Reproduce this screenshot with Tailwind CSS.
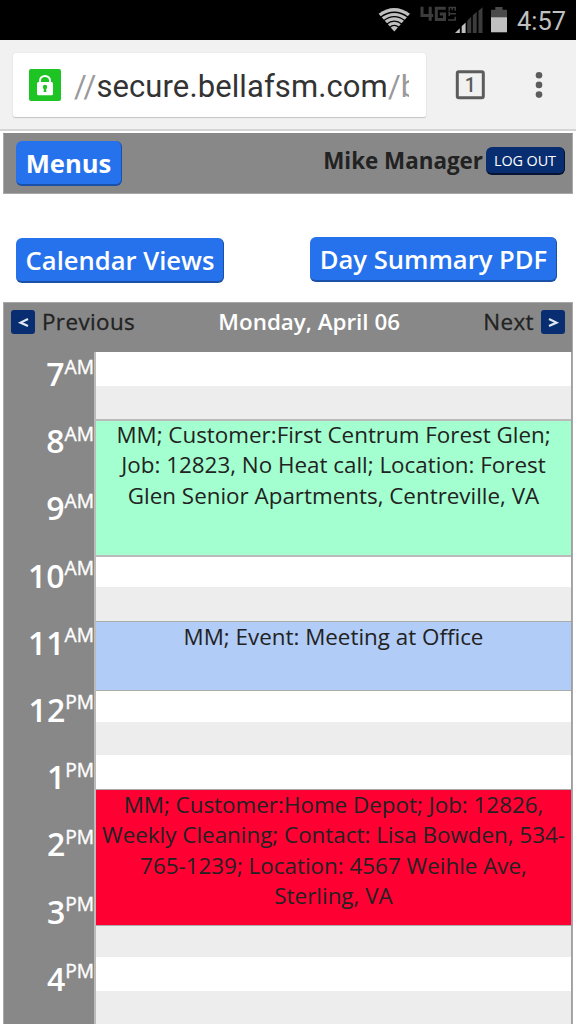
<!DOCTYPE html>
<html lang="en">
<head>
  <meta charset="UTF-8" />
  <meta name="viewport" content="width=device-width, initial-scale=1.0" />
  <title>Day Calendar</title>
  <script src="https://cdn.jsdelivr.net/npm/@tailwindcss/browser@4"></script>
</head>
<body class="bg-white h-[1024px] overflow-hidden font-['Open_Sans',sans-serif] text-[#222]">

  <!-- Status bar -->
  <div class="h-10 bg-black flex justify-end text-[#c0c0c0]">
    <svg width="210" height="40" viewBox="0 0 210 40">
      <!-- wifi -->
      <path d="M12.6 13.7 Q28.3 2.3 44 13.7 L28.3 31.5 Z" fill="#c0c0c0"/>
      <g fill="none" stroke="#000" stroke-width="1.3">
        <path d="M14.5 17.2 Q28.3 7.3 42.1 17.2"/>
        <path d="M17.5 20.8 Q28.3 12.6 39.1 20.8"/>
        <path d="M20.5 24.2 Q28.3 18 36.1 24.2"/>
        <path d="M23.5 27.4 Q28.3 23.4 33.1 27.4"/>
      </g>
      <!-- 4G LTE -->
      <g fill="none" stroke="#3c3c3c" stroke-width="3">
        <path d="M56 6.8 V15.6 H67.2 M64.2 6.8 V20.8"/>
        <path d="M79.8 8.3 H70.3 V19.4 H78.5 V14 H73.8"/>
      </g>
      <g fill="none" stroke="#3c3c3c" stroke-width="1.5">
        <path d="M82 20 H89.3 V16.8"/>
        <path d="M82.5 13.7 H90 M83.2 11.4 V16"/>
        <path d="M83.2 10.7 V7.4 H89.3 V10.7 M86.2 7.4 V10.2"/>
      </g>
      <!-- signal -->
      <path d="M89 33 L93.8 28.2 V33 Z M95.7 26.3 L99.6 22.5 V33 H95.7 Z" fill="#c0c0c0"/>
      <path d="M101.2 20.8 L105.2 16.8 V33 H101.2 Z M106.8 15.3 L110.7 11.7 V33 H106.8 Z M112.5 10.8 L116.5 7.2 V33 H112.5 Z" fill="#3c3c3c"/>
      <!-- battery -->
      <path d="M125 9.7 H129.3 V7 H136.5 V9.7 H141 V18 H125 Z" fill="#4a4a4a"/>
      <path d="M125 17.3 H141 V32.3 H125 Z" fill="#c0c0c0"/>
      <text x="151" y="29.8" font-size="25.5" textLength="49" lengthAdjust="spacingAndGlyphs" fill="#c0c0c0" class="font-['Roboto']">4:57</text>
    </svg>
  </div>

  <!-- Browser toolbar -->
  <div class="h-[91px] bg-[#f1f1f1] border-b-2 border-[#d5d5d5] flex items-start pt-[13px] pl-[13px]">
    <div class="w-[413px] h-16 bg-white rounded-xs shadow-[0_1px_1px_#c4c4c4,0_0_1px_#c4c4c4] flex items-center pl-4">
      <svg width="32" height="32" viewBox="0 0 32 32" class="shrink-0">
        <rect width="32" height="32" rx="2" fill="#1dc424"/>
        <rect x="8" y="13" width="16" height="13.3" rx="1.5" fill="#fff"/>
        <path d="M11 14 V11.5 A5 4.5 0 0 1 21 11.5 V14" fill="none" stroke="#fff" stroke-width="2"/>
        <circle cx="16" cy="18" r="2.2" fill="#1dc424"/>
        <path d="M15 18 H17 L17.4 23 H14.6 Z" fill="#1dc424"/>
      </svg>
      <div class="mt-[3px] ml-[13px] w-[335px] overflow-hidden whitespace-nowrap font-['Roboto',sans-serif] text-[31px] leading-10 text-[#999] tracking-[0.1px]">//<span class="text-[#333]">secure.bellafsm.com</span>/b</div>
    </div>
    <svg width="120" height="64" viewBox="0 0 120 64" class="ml-[20px]">
      <rect x="11.3" y="18.8" width="26" height="26" rx="1.5" fill="none" stroke="#5c5c5c" stroke-width="3"/>
      <text x="24.3" y="38.6" text-anchor="middle" font-size="19.5" font-weight="500" fill="#5c5c5c" class="font-['Roboto']">1</text>
      <g fill="#5c5c5c">
        <circle cx="93" cy="22.3" r="3.3"/>
        <circle cx="93" cy="31.9" r="3.3"/>
        <circle cx="93" cy="41.6" r="3.3"/>
      </g>
    </svg>
  </div>

  <!-- Page header -->
  <div class="mt-[2px] mx-[3px] h-[61px] bg-[#888] border border-[#a8a8a8] border-t-[#888] flex items-start justify-between pl-3 pr-[7px] pt-[7px]">
    <button class="w-[106px] h-[45px] pt-[2px] rounded-[6px] bg-[#2672ec] border-r border-b-2 border-[#1a50a8] text-white font-bold text-[25.6px] leading-none whitespace-nowrap">Menus</button>
    <div class="flex items-center pt-[6px]">
      <span class="font-bold text-[22.4px] leading-[28px] mr-[3px]">Mike Manager</span>
      <button class="w-[79px] h-[28px] pt-[2px] rounded-[6px] bg-[#082d70] border-r border-b-2 border-[#061431] text-white text-[14.4px] leading-none tracking-[-0.1px] whitespace-nowrap">LOG OUT</button>
    </div>
  </div>

  <!-- Page actions -->
  <div class="h-[108px] flex items-start justify-between pl-4 pr-[19px] pt-[43px]">
    <button class="mt-[1px] w-[208px] h-[45px] pt-[2px] pl-[1px] rounded-[6px] bg-[#2672ec] border-r border-b-2 border-[#1a50a8] text-white font-semibold text-[25.6px] leading-none whitespace-nowrap">Calendar Views</button>
    <button class="w-[247px] h-[45px] pt-[2px] pl-[1px] rounded-[6px] bg-[#2672ec] border-r border-b-2 border-[#1a50a8] text-white font-semibold text-[25.6px] leading-none whitespace-nowrap">Day Summary PDF</button>
  </div>

  <!-- Day view -->
  <div class="mx-[3px] bg-[#888] border-t border-x border-[#a8a8a8] h-[722px]">
    <div class="h-[49px] flex justify-between items-start px-[7px] pt-[7px] text-[22.4px] leading-6 font-semibold whitespace-nowrap">
      <div class="flex items-center">
        <svg width="24" height="24" viewBox="0 0 24 24"><rect width="24" height="24" rx="3" fill="#082d70"/><path d="M17 9 L9.5 12.6 L17 16" fill="none" stroke="#e0e6f0" stroke-width="2.2"/></svg>
        <span class="ml-[7px] font-medium [-webkit-text-stroke:0.3px_#222] tracking-[0.4px]">Previous</span>
      </div>
      <span class="text-white">Monday, April 06</span>
      <div class="flex items-center justify-end">
        <span class="mr-[7px] font-medium [-webkit-text-stroke:0.3px_#222] tracking-[0.4px]">Next</span>
        <svg width="24" height="24" viewBox="0 0 24 24"><rect width="24" height="24" rx="3" fill="#082d70"/><path d="M8 9 L15.5 12.6 L8 16" fill="none" stroke="#e0e6f0" stroke-width="2.2"/></svg>
      </div>
    </div>

    <div class="flex">
      <!-- Hours -->
      <div class="w-[90px] shrink-0 text-white font-semibold text-[32px] text-right whitespace-nowrap">
        <div class="h-[67.2px] leading-[43px]">7<span class="relative -top-[12.5px] text-[19.2px] leading-none font-medium [-webkit-text-stroke:0.4px_#fff]">AM</span></div>
        <div class="h-[67.2px] leading-[43px]">8<span class="relative -top-[12.5px] text-[19.2px] leading-none font-medium [-webkit-text-stroke:0.4px_#fff]">AM</span></div>
        <div class="h-[67.2px] leading-[43px]">9<span class="relative -top-[12.5px] text-[19.2px] leading-none font-medium [-webkit-text-stroke:0.4px_#fff]">AM</span></div>
        <div class="h-[67.2px] leading-[43px]">10<span class="relative -top-[12.5px] text-[19.2px] leading-none font-medium [-webkit-text-stroke:0.4px_#fff]">AM</span></div>
        <div class="h-[67.2px] leading-[43px]">11<span class="relative -top-[12.5px] text-[19.2px] leading-none font-medium [-webkit-text-stroke:0.4px_#fff]">AM</span></div>
        <div class="h-[67.2px] leading-[43px]">12<span class="relative -top-[12.5px] text-[19.2px] leading-none font-medium [-webkit-text-stroke:0.4px_#fff]">PM</span></div>
        <div class="h-[67.2px] leading-[43px]">1<span class="relative -top-[12.5px] text-[19.2px] leading-none font-medium [-webkit-text-stroke:0.4px_#fff]">PM</span></div>
        <div class="h-[67.2px] leading-[43px]">2<span class="relative -top-[12.5px] text-[19.2px] leading-none font-medium [-webkit-text-stroke:0.4px_#fff]">PM</span></div>
        <div class="h-[67.2px] leading-[43px]">3<span class="relative -top-[12.5px] text-[19.2px] leading-none font-medium [-webkit-text-stroke:0.4px_#fff]">PM</span></div>
        <div class="h-[67.2px] leading-[43px]">4<span class="relative -top-[12.5px] text-[19.2px] leading-none font-medium [-webkit-text-stroke:0.4px_#fff]">PM</span></div>
      </div>

      <!-- Half hour slots and bookings -->
      <div class="flex-1 border-l-2 border-r border-l-[#bbb] border-r-[#a0a0a0] bg-white text-center text-[22.4px] leading-[30.4px] whitespace-nowrap">
        <div class="h-[34px]"></div>
        <div class="h-[33px] bg-[#ededed]"></div>
        <div class="h-[138px] bg-[#a3ffcf] border-y-2 border-[#bbb]">
          <div class="-mt-px">MM; Customer:First Centrum Forest Glen;<br>Job: 12823, No Heat call; Location: Forest<br>Glen Senior Apartments, Centreville, VA</div>
        </div>
        <div class="h-[30px]"></div>
        <div class="h-[34px] bg-[#ededed]"></div>
        <div class="h-[70px] bg-[#b1ccf7] border-y border-[#aaa]">MM; Event: Meeting at Office</div>
        <div class="h-[31px]"></div>
        <div class="h-[33px] bg-[#ededed]"></div>
        <div class="h-[34px]"></div>
        <div class="h-[137px] bg-[#ff0033] border-y border-[#aaa]">
          MM; Customer:Home Depot; Job: 12826,<br>Weekly Cleaning; Contact: Lisa Bowden, 534-<br>765-1239; Location: 4567 Weihle Ave,<br>Sterling, VA
        </div>
        <div class="h-[31px] bg-[#ededed]"></div>
        <div class="h-[34px]"></div>
        <div class="h-[34px] bg-[#ededed]"></div>
      </div>
    </div>
  </div>

</body>
</html>
